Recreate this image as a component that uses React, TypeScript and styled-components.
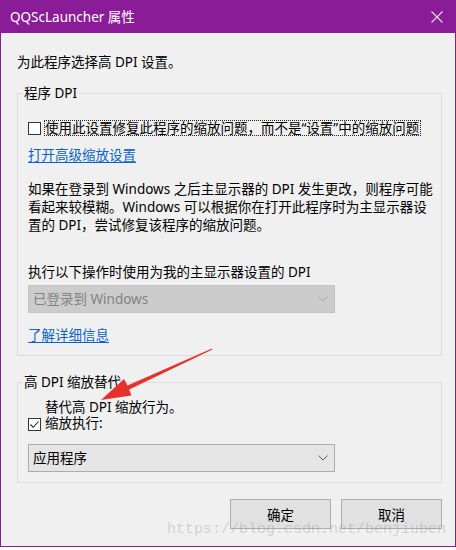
import React from "react";
import styled, { createGlobalStyle } from "styled-components";

const PURPLE = "#8b1c97";

const GlobalStyle = createGlobalStyle`
  html, body { margin: 0; padding: 0; background: #ffffff; }
  body {
    font-family: "Noto Sans", "Noto Sans CJK SC", sans-serif;
    color: #000;
    -webkit-font-smoothing: antialiased;
  }
`;

const Window = styled.div`
  position: relative;
  width: 456px;
  height: 547px;
  box-sizing: border-box;
  border: 1px solid ${PURPLE};
  border-top: none;
  background: #f0f0f0;
  display: flex;
  flex-direction: column;
  font-size: 13.5px;
`;

const TitleBar = styled.div`
  height: 33px;
  flex: none;
  background: ${PURPLE};
  color: #ffffff;
  display: flex;
  align-items: center;
  justify-content: space-between;
  padding: 0 12px 0 9px;
  font-size: 13.5px;
  line-height: 18px;
`;

const Body = styled.div`
  display: flex;
  flex-direction: column;
  padding: 0 13px 0 16px;
`;

const Intro = styled.div`
  margin-top: 20px;
  line-height: 18px;
`;

const Group = styled.fieldset<{ $gap: number; $pad: string }>`
  margin: ${(p) => p.$gap}px 0 0;
  padding: ${(p) => p.$pad};
  border: 1px solid #dcdcdc;
  min-width: 0;
  display: flex;
  flex-direction: column;
  align-items: flex-start;
`;

const Legend = styled.legend`
  padding: 0 2px;
  margin-left: -6px;
  line-height: 18px;
`;

const CheckRow = styled.div<{ $align: string }>`
  display: flex;
  align-items: ${(p) => p.$align};
  gap: 4px;
`;

const Box = styled.span`
  width: 13px;
  height: 13px;
  box-sizing: border-box;
  border: 1px solid #333333;
  background: #ffffff;
  display: inline-flex;
  align-items: center;
  justify-content: center;
  flex: none;
`;

const FocusLabel = styled.span`
  border: 1px dotted #222;
  padding: 0 1px 0 0;
  line-height: 14px;
  margin-left: -1px;
  white-space: nowrap;
`;

const StackLabel = styled.span`
  display: flex;
  flex-direction: column;
  line-height: 16px;
`;

const Link = styled.a<{ $gap: number }>`
  margin-top: ${(p) => p.$gap}px;
  line-height: 18px;
  color: #0a64c8;
  text-decoration: underline;
  text-underline-offset: 2px;
  cursor: pointer;
`;

const Para = styled.div`
  margin-top: 16px;
  line-height: 18px;
`;

const Line = styled.span`
  display: block;
  white-space: nowrap;
`;

const FieldLabel = styled.div`
  margin-top: 29px;
  line-height: 18px;
`;

const Select = styled.div<{ $disabled?: boolean; $gap: number }>`
  margin-top: ${(p) => p.$gap}px;
  width: 307px;
  height: 28px;
  box-sizing: border-box;
  display: flex;
  align-items: center;
  justify-content: space-between;
  padding: 0 6px 0 4px;
  background: ${(p) => (p.$disabled ? "#cccccc" : "#e5e5e5")};
  border: 1px solid ${(p) => (p.$disabled ? "#c4c4c4" : "#acacac")};
  color: ${(p) => (p.$disabled ? "#838383" : "#000000")};
  line-height: 18px;
`;

const Buttons = styled.div`
  display: flex;
  justify-content: flex-end;
  gap: 10px;
  margin-top: 16px;
`;

const Button = styled.button`
  width: 101px;
  height: 30px;
  box-sizing: border-box;
  background: #e1e1e1;
  border: 1px solid #adadad;
  font-family: inherit;
  font-size: 13.5px;
  color: #000;
  padding: 0;
`;

const Watermark = styled.div`
  position: absolute;
  left: 166px;
  top: 520px;
  font-family: "Liberation Mono", "DejaVu Sans Mono", monospace;
  font-size: 15px;
  line-height: 20px;
  color: rgba(140, 140, 140, 0.32);
  white-space: nowrap;
  pointer-events: none;
`;

const Overlay = styled.svg`
  position: absolute;
  left: -1px;
  top: 0;
  pointer-events: none;
`;

const Chevron = ({ color }: { color: string }) => (
  <svg width="10" height="6" viewBox="0 0 10 6">
    <polyline points="0.5,0.5 5,5 9.5,0.5" fill="none" stroke={color} strokeWidth="1" />
  </svg>
);

export default function App() {
  return (
    <>
      <GlobalStyle />
      <Window>
        <TitleBar>
          <span>QQScLauncher 属性</span>
          <svg width="12" height="12" viewBox="0 0 12 12">
            <line x1="0.5" y1="0.5" x2="11.5" y2="11.5" stroke="#f2dcf4" strokeWidth="1.1" />
            <line x1="11.5" y1="0.5" x2="0.5" y2="11.5" stroke="#f2dcf4" strokeWidth="1.1" />
          </svg>
        </TitleBar>
        <Body>
          <Intro>为此程序选择高 DPI 设置。</Intro>

          <Group $gap={13} $pad="18px 10px 11px">
            <Legend>程序 DPI</Legend>
            <CheckRow $align="center">
              <Box />
              <FocusLabel>使用此设置修复此程序的缩放问题，而不是“设置”中的缩放问题</FocusLabel>
            </CheckRow>
            <Link $gap={10}>打开高级缩放设置</Link>
            <Para>
              <Line>如果在登录到 Windows 之后主显示器的 DPI 发生更改，则程序可能</Line>
              <Line>看起来较模糊。Windows 可以根据你在打开此程序时为主显示器设</Line>
              <Line>置的 DPI，尝试修复该程序的缩放问题。</Line>
            </Para>
            <FieldLabel>执行以下操作时使用为我的主显示器设置的 DPI</FieldLabel>
            <Select $disabled $gap={4}>
              <span>已登录到 Windows</span>
              <Chevron color="#a8a8a8" />
            </Select>
            <Link $gap={13}>了解详细信息</Link>
          </Group>

          <Group $gap={17} $pad="8px 10px 10px">
            <Legend>高 DPI 缩放替代</Legend>
            <CheckRow $align="flex-end">
              <Box>
                <svg width="11" height="11" viewBox="0 0 11 11">
                  <polyline points="1.5,5.5 4.2,8.3 9.5,2.5" fill="none" stroke="#222" strokeWidth="1.1" />
                </svg>
              </Box>
              <StackLabel>
                <span>替代高 DPI 缩放行为。</span>
                <span>缩放执行:</span>
              </StackLabel>
            </CheckRow>
            <Select $gap={13}>
              <span>应用程序</span>
              <Chevron color="#606060" />
            </Select>
          </Group>

          <Buttons>
            <Button>确定</Button>
            <Button>取消</Button>
          </Buttons>
        </Body>

        <Watermark>https://blog.csdn.net/benjiuben</Watermark>
        <Overlay width="456" height="550" viewBox="0 0 456 550">
          <polygon
            points="101,400 124,379 127.5,385.5 212,348.6 212.4,349.6 129.2,389.5 131.5,395.5"
            fill="#e8302c"
          />
        </Overlay>
      </Window>
    </>
  );
}
